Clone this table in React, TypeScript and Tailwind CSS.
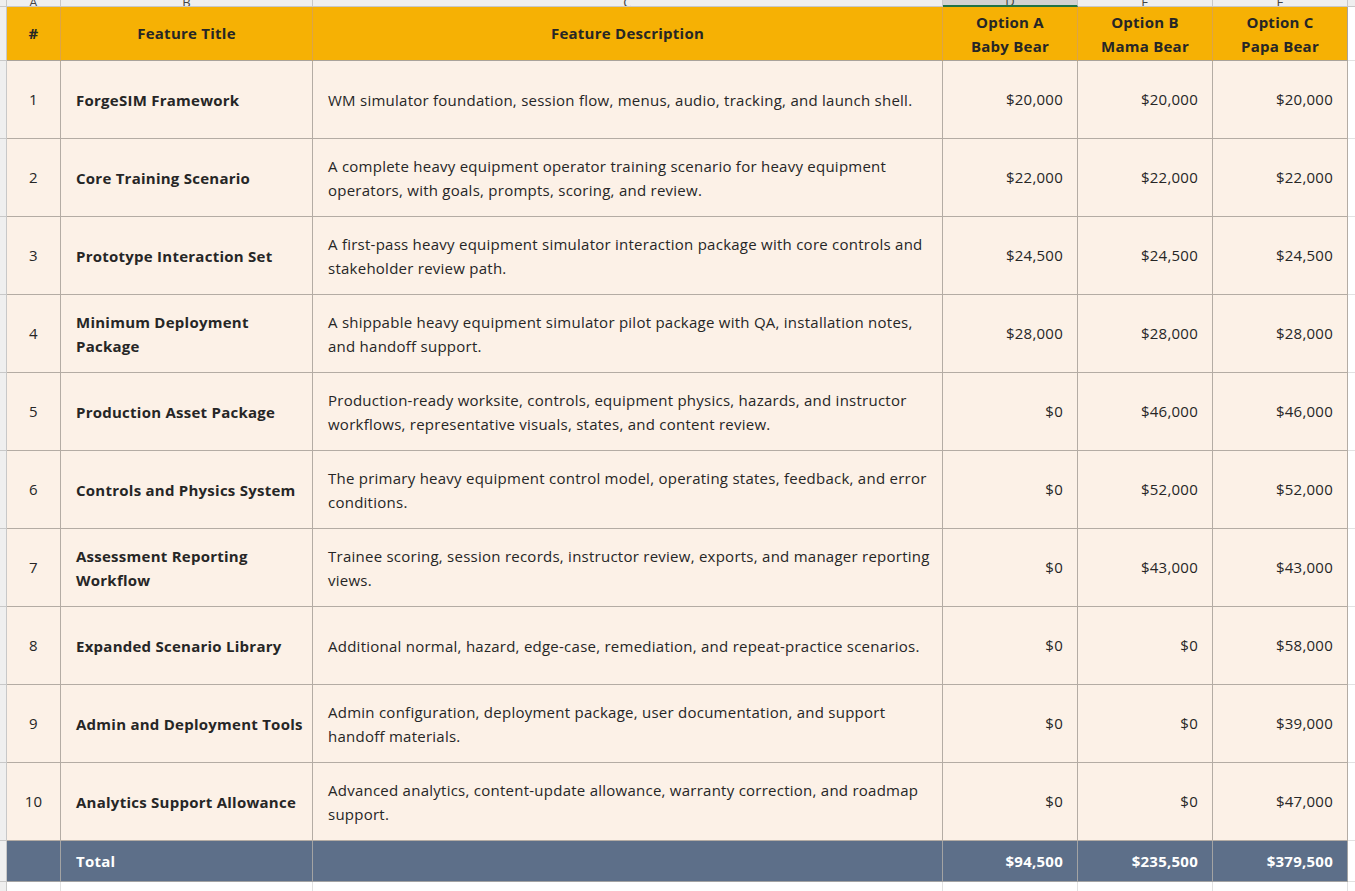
import React from "react";

type Row = {
  n: number;
  title: string[];
  desc: string[];
  a: string;
  b: string;
  c: string;
};

const rows: Row[] = [
  { n: 1, title: ["ForgeSIM Framework"], desc: ["WM simulator foundation, session flow, menus, audio, tracking, and launch shell."], a: "$20,000", b: "$20,000", c: "$20,000" },
  { n: 2, title: ["Core Training Scenario"], desc: ["A complete heavy equipment operator training scenario for heavy equipment", "operators, with goals, prompts, scoring, and review."], a: "$22,000", b: "$22,000", c: "$22,000" },
  { n: 3, title: ["Prototype Interaction Set"], desc: ["A first-pass heavy equipment simulator interaction package with core controls and", "stakeholder review path."], a: "$24,500", b: "$24,500", c: "$24,500" },
  { n: 4, title: ["Minimum Deployment", "Package"], desc: ["A shippable heavy equipment simulator pilot package with QA, installation notes,", "and handoff support."], a: "$28,000", b: "$28,000", c: "$28,000" },
  { n: 5, title: ["Production Asset Package"], desc: ["Production-ready worksite, controls, equipment physics, hazards, and instructor", "workflows, representative visuals, states, and content review."], a: "$0", b: "$46,000", c: "$46,000" },
  { n: 6, title: ["Controls and Physics System"], desc: ["The primary heavy equipment control model, operating states, feedback, and error", "conditions."], a: "$0", b: "$52,000", c: "$52,000" },
  { n: 7, title: ["Assessment Reporting", "Workflow"], desc: ["Trainee scoring, session records, instructor review, exports, and manager reporting", "views."], a: "$0", b: "$43,000", c: "$43,000" },
  { n: 8, title: ["Expanded Scenario Library"], desc: ["Additional normal, hazard, edge-case, remediation, and repeat-practice scenarios."], a: "$0", b: "$0", c: "$58,000" },
  { n: 9, title: ["Admin and Deployment Tools"], desc: ["Admin configuration, deployment package, user documentation, and support", "handoff materials."], a: "$0", b: "$0", c: "$39,000" },
  { n: 10, title: ["Analytics Support Allowance"], desc: ["Advanced analytics, content-update allowance, warranty correction, and roadmap", "support."], a: "$0", b: "$0", c: "$47,000" },
];

const Lines = ({ lines }: { lines: string[] }) => (
  <div className="flex flex-col">
    {lines.map((l, i) => (
      <span key={i} className="whitespace-nowrap leading-[24px]">
        {l}
      </span>
    ))}
  </div>
);

const body = "border-r border-b border-[#b4aca4] bg-[#fcf1e7] flex items-center";

export default function App() {
  return (
    <div
      className="w-[1355px] h-[891px] overflow-hidden bg-white text-[#262626] text-[15px] tracking-[0.25px]"
      style={{ fontFamily: "'Open Sans', Lato, 'Liberation Sans', sans-serif" }}
    >
      <div className="grid grid-cols-[7px_54px_252px_630px_135px_135px_135px_7px] grid-rows-[7px_54px_repeat(10,78px)_41px_9px]">
        {/* column letter strip */}
        <div className="bg-[#efefef] border-r border-b border-[#c8c8c8]" />
        {["A", "B", "C", "D", "E", "F"].map((l, i) => (
          <div
            key={l}
            className={`overflow-hidden flex items-end justify-center border-r border-[#c8c8c8] text-[13px] text-[#444] ${
              i === 3 ? "bg-[#d2d2d2] border-b-2 border-b-[#217346]" : "bg-[#efefef] border-b"
            }`}
          >
            <span className="leading-[12px] -mb-[2px]">{l}</span>
          </div>
        ))}
        <div className="bg-[#efefef] border-b border-[#c8c8c8]" />

        {/* header row */}
        <div className="bg-[#efefef] border-r border-b border-[#c8c8c8]" />
        <div className="bg-[#f6b104] border-r border-[#dca446] border-b border-b-[#a9a39b] flex items-center justify-center font-bold">
          #
        </div>
        <div className="bg-[#f6b104] border-r border-[#dca446] border-b border-b-[#a9a39b] flex items-center justify-center font-bold">
          Feature Title
        </div>
        <div className="bg-[#f6b104] border-r border-[#dca446] border-b border-b-[#a9a39b] flex items-center justify-center font-bold">
          Feature Description
        </div>
        {[
          ["Option A", "Baby Bear"],
          ["Option B", "Mama Bear"],
          ["Option C", "Papa Bear"],
        ].map((h, i) => (
          <div
            key={i}
            className={`bg-[#f6b104] border-r ${i === 2 ? "border-[#a9a39b]" : "border-[#dca446]"} border-b border-b-[#a9a39b] flex flex-col items-center justify-center font-bold`}
          >
            <span className="leading-[24px]">{h[0]}</span>
            <span className="leading-[24px]">{h[1]}</span>
          </div>
        ))}
        <div className="bg-white border-b border-[#e1e1e1]" />

        {/* data rows */}
        {rows.map((r) => (
          <React.Fragment key={r.n}>
            <div className="bg-[#efefef] border-r border-b border-[#c8c8c8]" />
            <div className={`${body} justify-center`}>{r.n}</div>
            <div className={`${body} pl-[15px] font-bold`}>
              <Lines lines={r.title} />
            </div>
            <div className={`${body} pl-[15px]`}>
              <Lines lines={r.desc} />
            </div>
            <div className={`${body} justify-end pr-[14px]`}>{r.a}</div>
            <div className={`${body} justify-end pr-[14px]`}>{r.b}</div>
            <div className={`${body} justify-end pr-[14px]`}>{r.c}</div>
            <div className="bg-white border-b border-[#e1e1e1]" />
          </React.Fragment>
        ))}

        {/* total row */}
        <div className="bg-[#efefef] border-r border-b border-[#c8c8c8]" />
        <div className="bg-[#5d6f89] border-r border-b border-[#a3a3a3]" />
        <div className="bg-[#5d6f89] border-r border-b border-[#a3a3a3] flex items-center pl-[15px] font-bold text-white">
          Total
        </div>
        <div className="bg-[#5d6f89] border-r border-b border-[#a3a3a3]" />
        {["$94,500", "$235,500", "$379,500"].map((v) => (
          <div
            key={v}
            className="bg-[#5d6f89] border-r border-b border-[#a3a3a3] flex items-center justify-end pr-[14px] font-bold text-white"
          >
            {v}
          </div>
        ))}
        <div className="bg-white border-b border-[#e1e1e1]" />

        {/* below */}
        <div className="bg-[#efefef] border-r border-[#c8c8c8]" />
        {[0, 1, 2, 3, 4, 5].map((i) => (
          <div key={i} className="bg-white border-r border-[#e1e1e1]" />
        ))}
        <div className="bg-white" />
      </div>
    </div>
  );
}
